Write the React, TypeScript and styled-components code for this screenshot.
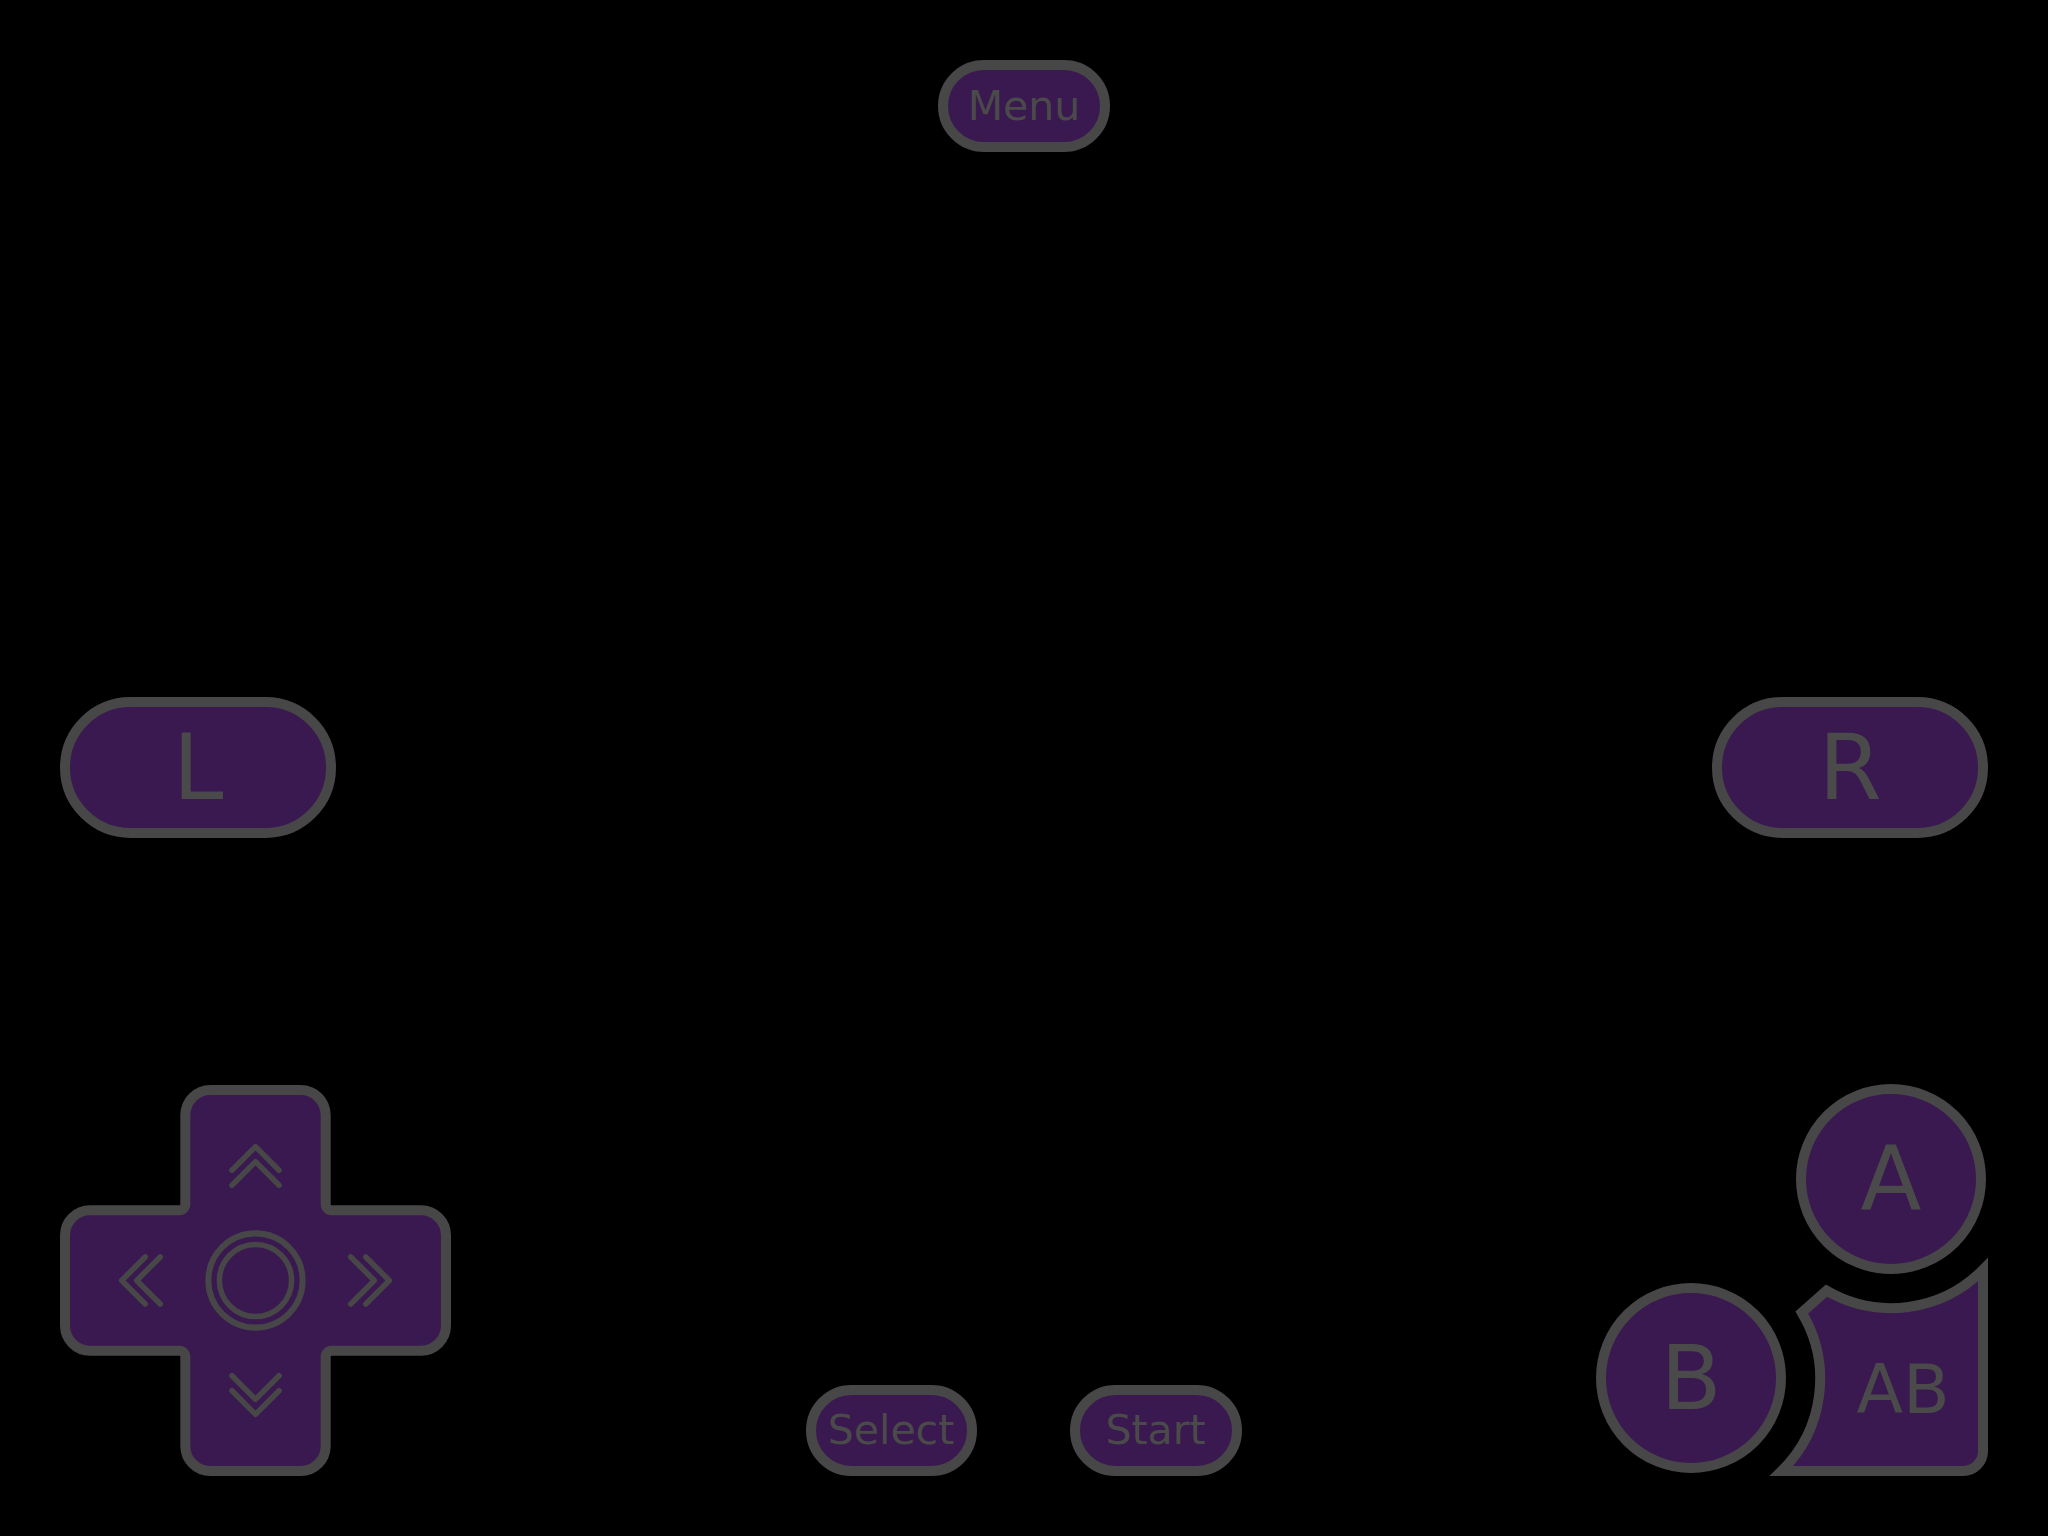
import styled, { createGlobalStyle } from "styled-components";

const FILL = "#3a1850";
const EDGE = "#474747";
const INK = "#4a4a4a";

const GlobalStyle = createGlobalStyle`
  html, body {
    margin: 0;
    padding: 0;
    background: #000;
  }
  * {
    box-sizing: border-box;
  }
`;

const Screen = styled.div`
  width: 2048px;
  height: 1536px;
  padding: 60px;
  display: flex;
  flex-direction: column;
  background: #000;
  font-family: "DejaVu Sans", "Liberation Sans", sans-serif;
  overflow: hidden;
`;

const TopBar = styled.div`
  display: flex;
  justify-content: center;
`;

const ShoulderRow = styled.div`
  margin-top: 545px;
  display: flex;
  justify-content: space-between;
`;

const BottomRow = styled.div`
  margin-top: auto;
  display: flex;
  justify-content: space-between;
  align-items: flex-end;
`;

const SystemGroup = styled.div`
  display: flex;
  gap: 93px;
`;

// pill shaped key: menu, select, start, shoulders
const Pill = styled.div<{ $w: number; $h: number; $size: number }>`
  width: ${(p) => p.$w}px;
  height: ${(p) => p.$h}px;
  border: 10px solid ${EDGE};
  border-radius: 999px;
  background: ${FILL};
  color: ${INK};
  font-size: ${(p) => p.$size}px;
  display: flex;
  align-items: center;
  justify-content: center;
  line-height: 1;
  user-select: none;
`;

const DPadBox = styled.div`
  width: 391px;
  height: 391px;
`;

const FaceCluster = styled.div`
  position: relative;
  width: 392px;
  height: 392px;
`;

const RoundKey = styled.div<{ $pos: "a" | "b" }>`
  position: absolute;
  width: 190px;
  height: 190px;
  border: 10px solid ${EDGE};
  border-radius: 50%;
  background: ${FILL};
  color: ${INK};
  font-size: 89px;
  line-height: 1;
  display: flex;
  align-items: center;
  justify-content: center;
  ${(p) => (p.$pos === "a" ? "right: 2px; top: 0;" : "left: 0; top: 199px;")}
`;

const ComboKey = styled.div`
  position: absolute;
  inset: 0;
`;

const ComboShape = styled.svg`
  display: block;
  width: 392px;
  height: 392px;
`;

const ComboLabel = styled.span`
  position: absolute;
  left: 307px;
  top: 306px;
  transform: translate(-50%, -50%);
  color: ${INK};
  font-size: 68px;
  line-height: 1;
`;

const crossPath = (() => {
  const a = 5;
  const b = 125;
  const c = 265;
  const d = 385;
  const r = 25;
  const q = 6;
  return [
    `M ${b + r} ${a}`,
    `H ${c - r}`,
    `A ${r} ${r} 0 0 1 ${c} ${a + r}`,
    `V ${b - q}`,
    `A ${q} ${q} 0 0 0 ${c + q} ${b}`,
    `H ${d - r}`,
    `A ${r} ${r} 0 0 1 ${d} ${b + r}`,
    `V ${c - r}`,
    `A ${r} ${r} 0 0 1 ${d - r} ${c}`,
    `H ${c + q}`,
    `A ${q} ${q} 0 0 0 ${c} ${c + q}`,
    `V ${d - r}`,
    `A ${r} ${r} 0 0 1 ${c - r} ${d}`,
    `H ${b + r}`,
    `A ${r} ${r} 0 0 1 ${b} ${d - r}`,
    `V ${c + q}`,
    `A ${q} ${q} 0 0 0 ${b - q} ${c}`,
    `H ${a + r}`,
    `A ${r} ${r} 0 0 1 ${a} ${c - r}`,
    `V ${b + r}`,
    `A ${r} ${r} 0 0 1 ${a + r} ${b}`,
    `H ${b - q}`,
    `A ${q} ${q} 0 0 0 ${b} ${b - q}`,
    `V ${a + r}`,
    `A ${r} ${r} 0 0 1 ${b + r} ${a}`,
    "Z",
  ].join(" ");
})();

// double chevron pointing up, rotated for the other directions
const Chevrons = ({ turn }: { turn: number }) => (
  <g transform={`rotate(${turn} 195 195)`}>
    <path d="M 171.5 85 L 195 61.5 L 218.5 85" />
    <path d="M 171.5 100 L 195 76.5 L 218.5 100" />
  </g>
);

const DPad = () => (
  <DPadBox>
    <svg width="391" height="391" viewBox="0 0 390 390">
      <path d={crossPath} fill={FILL} stroke={EDGE} strokeWidth="10" />
      <g fill="none" stroke={EDGE} strokeWidth="5.5" strokeLinecap="round" strokeLinejoin="round">
        <Chevrons turn={0} />
        <Chevrons turn={90} />
        <Chevrons turn={180} />
        <Chevrons turn={270} />
        <circle cx="195" cy="195" r="47" strokeWidth="6" />
        <circle cx="195" cy="195" r="36" />
      </g>
    </svg>
  </DPadBox>
);

const comboPath =
  "M 387 185.7 A 129 129 0 0 1 230.5 206.7 L 205.8 228.6 " +
  "A 129 129 0 0 1 185.5 387 L 367 387 A 20 20 0 0 0 387 367 Z";

const FaceButtons = () => (
  <FaceCluster>
    <ComboKey>
      <ComboShape viewBox="0 0 392 392">
        <path d={comboPath} fill={FILL} stroke={EDGE} strokeWidth="10" strokeLinejoin="miter" />
      </ComboShape>
      <ComboLabel>AB</ComboLabel>
    </ComboKey>
    <RoundKey $pos="a">A</RoundKey>
    <RoundKey $pos="b">B</RoundKey>
  </FaceCluster>
);

export default function App() {
  return (
    <>
      <GlobalStyle />
      <Screen>
        <TopBar>
          <Pill $w={172} $h={92} $size={41}>
            Menu
          </Pill>
        </TopBar>
        <ShoulderRow>
          <Pill $w={276} $h={141} $size={91}>
            L
          </Pill>
          <Pill $w={276} $h={141} $size={91}>
            R
          </Pill>
        </ShoulderRow>
        <BottomRow>
          <DPad />
          <SystemGroup>
            <Pill $w={171} $h={91} $size={41}>
              Select
            </Pill>
            <Pill $w={172} $h={91} $size={41}>
              Start
            </Pill>
          </SystemGroup>
          <FaceButtons />
        </BottomRow>
      </Screen>
    </>
  );
}
